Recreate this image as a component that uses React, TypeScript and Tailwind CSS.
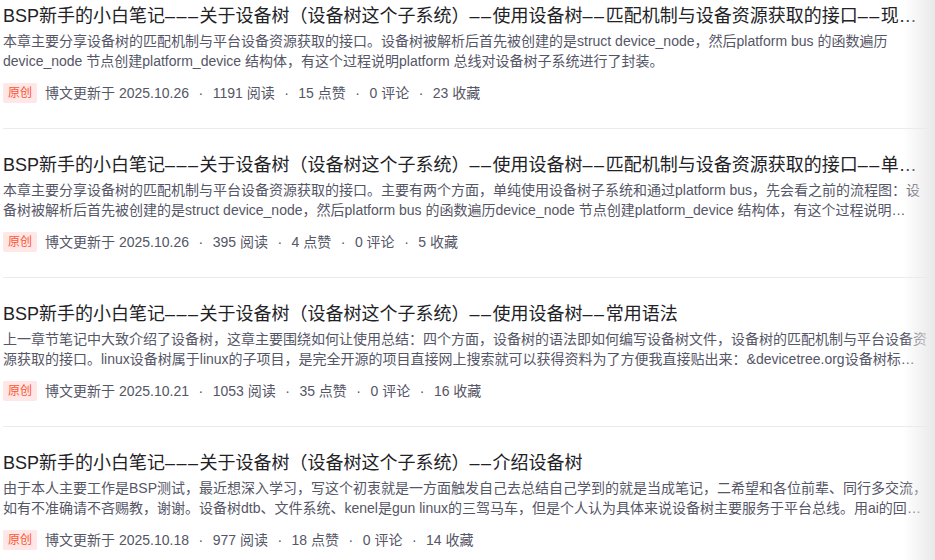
import React from "react";

type Item = {
  title: string;
  desc: string;
  date: string;
  reads: string;
  likes: string;
  comments: string;
  favs: string;
};

const items: Item[] = [
  {
    title:
      "BSP新手的小白笔记–––关于设备树（设备树这个子系统）––使用设备树––匹配机制与设备资源获取的接口––现象与验证",
    desc:
      "本章主要分享设备树的匹配机制与平台设备资源获取的接口。设备树被解析后首先被创建的是struct device_node，然后platform bus 的函数遍历device_node 节点创建platform_device 结构体，有这个过程说明platform 总线对设备树子系统进行了封装。",
    date: "2025.10.26",
    reads: "1191",
    likes: "15",
    comments: "0",
    favs: "23",
  },
  {
    title:
      "BSP新手的小白笔记–––关于设备树（设备树这个子系统）––使用设备树––匹配机制与设备资源获取的接口––单纯使用设备树子系统",
    desc:
      "本章主要分享设备树的匹配机制与平台设备资源获取的接口。主要有两个方面，单纯使用设备树子系统和通过platform bus，先会看之前的流程图：设备树被解析后首先被创建的是struct device_node，然后platform bus 的函数遍历device_node 节点创建platform_device 结构体，有这个过程说明platform 总线对设备树子系统进行了封装。",
    date: "2025.10.26",
    reads: "395",
    likes: "4",
    comments: "0",
    favs: "5",
  },
  {
    title: "BSP新手的小白笔记–––关于设备树（设备树这个子系统）––使用设备树––常用语法",
    desc:
      "上一章节笔记中大致介绍了设备树，这章主要围绕如何让使用总结：四个方面，设备树的语法即如何编写设备树文件，设备树的匹配机制与平台设备资源获取的接口。linux设备树属于linux的子项目，是完全开源的项目直接网上搜索就可以获得资料为了方便我直接贴出来：&devicetree.org设备树标准规范文档。",
    date: "2025.10.21",
    reads: "1053",
    likes: "35",
    comments: "0",
    favs: "16",
  },
  {
    title: "BSP新手的小白笔记–––关于设备树（设备树这个子系统）––介绍设备树",
    desc:
      "由于本人主要工作是BSP测试，最近想深入学习，写这个初衷就是一方面触发自己去总结自己学到的就是当成笔记，二希望和各位前辈、同行多交流，如有不准确请不吝赐教，谢谢。设备树dtb、文件系统、kenel是gun linux的三驾马车，但是个人认为具体来说设备树主要服务于平台总线。用ai的回答来说设备树是什么。",
    date: "2025.10.18",
    reads: "977",
    likes: "18",
    comments: "0",
    favs: "14",
  },
];

function Title({ text }: { text: string }) {
  const parts = text.split(/(–+)/);
  return (
    <>
      {parts.map((p, i) =>
        p.startsWith("–") ? (
          <span key={i} className="tracking-[1.5px]">
            {p}
          </span>
        ) : (
          <React.Fragment key={i}>{p}</React.Fragment>
        )
      )}
    </>
  );
}

const Dot = () => <span className="mx-[9.5px]">·</span>;

function Row({ item, first }: { item: Item; first: boolean }) {
  return (
    <div
      className={
        first
          ? "pt-[4px] pb-[25px]"
          : "border-t border-[#ececf0] pt-[24px] pb-[25px]"
      }
    >
      <div className="h-6 truncate text-[18px] leading-6 text-[#222226]">
        <Title text={item.title} />
      </div>
      <div className="mt-[3px] line-clamp-2 text-[14px] leading-5 text-[#555666]">
        {item.desc}
      </div>
      <div className="mt-3 flex h-5 items-center text-[14px] leading-5 text-[#555666]">
        <span className="mr-2 h-5 rounded-[2px] bg-[#ffe7e7] px-[5px] text-[12px] leading-5 text-[#fc5531]">
          原创
        </span>
        <span className="whitespace-pre">博文更新于 {item.date}</span>
        <Dot />
        <span className="whitespace-pre">{item.reads} 阅读</span>
        <Dot />
        <span className="whitespace-pre">{item.likes} 点赞</span>
        <Dot />
        <span className="whitespace-pre">{item.comments} 评论</span>
        <Dot />
        <span className="whitespace-pre">{item.favs} 收藏</span>
      </div>
    </div>
  );
}

export default function App() {
  return (
    <div
      className="relative h-[560px] w-[935px] overflow-hidden bg-white"
      style={{ fontFamily: '"Liberation Sans", "Noto Sans CJK SC", sans-serif' }}
    >
      <div className="ml-[3px] w-[924px]">
        {items.map((it, i) => (
          <Row key={i} item={it} first={i === 0} />
        ))}
      </div>
      <div className="pointer-events-none absolute right-0 top-0 h-full w-[32px] bg-gradient-to-r from-white/0 to-[#e9e9e9]" />
    </div>
  );
}
